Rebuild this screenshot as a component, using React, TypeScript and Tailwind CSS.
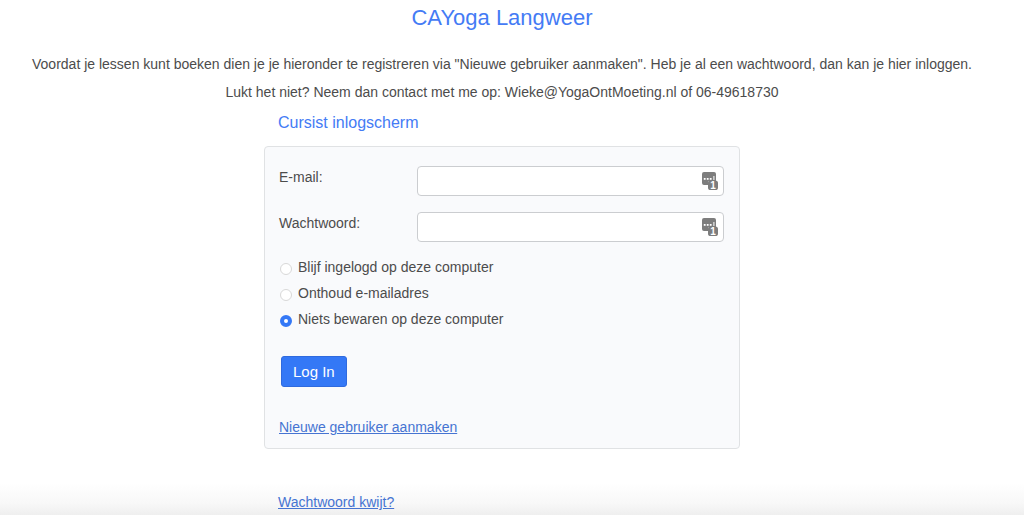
import { useState } from 'react'

const sessionOptions = [
  { id: 'stay', label: 'Blijf ingelogd op deze computer' },
  { id: 'remember', label: 'Onthoud e-mailadres' },
  { id: 'none', label: 'Niets bewaren op deze computer' },
]

function PasswordManagerIcon() {
  return (
    <svg
      viewBox="0 0 16 18"
      aria-hidden="true"
      className="pointer-events-none absolute right-1.5 top-1.5 h-[18px] w-4"
    >
      <path
        d="M2 0h10a2 2 0 0 1 2 2v7H6.5v4H2a2 2 0 0 1-2-2V2a2 2 0 0 1 2-2z"
        fill="#7d7d7d"
      />
      <rect x="1.8" y="6" width="1.8" height="1.8" fill="#fff" />
      <rect x="4.8" y="6" width="1.8" height="1.8" fill="#fff" />
      <rect x="7.8" y="6" width="1.8" height="1.8" fill="#fff" />
      <rect x="11.4" y="4" width="1" height="4" fill="#fff" />
      <rect x="6" y="8.5" width="10" height="9.5" rx="2.6" fill="#7d7d7d" />
      <text
        x="11"
        y="17"
        textAnchor="middle"
        fontSize="10"
        fontWeight="700"
        fill="#fff"
        fontFamily="Liberation Sans, sans-serif"
      >
        1
      </text>
    </svg>
  )
}

function Field({ id, label, type }: { id: string; label: string; type: string }) {
  return (
    <div className="flex items-start">
      <label htmlFor={id} className="w-[138px] shrink-0 leading-[22px]">
        {label}
      </label>
      <div className="relative flex-1">
        <input
          id={id}
          name={id}
          type={type}
          className="block h-[30px] w-full rounded border border-[#cbcdd0] bg-white pl-2 pr-7 outline-none focus:border-[#3478f6]"
        />
        <PasswordManagerIcon />
      </div>
    </div>
  )
}

export default function App() {
  const [session, setSession] = useState('none')

  return (
    <main className="min-h-screen bg-[linear-gradient(to_top,#efefef,#f8f8f8_12px,#fff_32px)] pr-5 font-['Liberation_Sans',Arial,sans-serif] text-sm text-[#4c4c4c] antialiased">
      {/* Intro */}
      <header className="text-center text-sm leading-7">
        <h1 className="text-[22px] leading-9 text-[#447bf5]">CAYoga Langweer</h1>
        <p className="mt-3.5">
          Voordat je lessen kunt boeken dien je je hieronder te registreren via "Nieuwe gebruiker
          aanmaken". Heb je al een wachtwoord, dan kan je hier inloggen.
        </p>
        <p>Lukt het niet? Neem dan contact met me op: Wieke@YogaOntMoeting.nl of 06-49618730</p>
      </header>

      {/* Login */}
      <section className="mx-auto max-w-[476px]">
        <h2 className="pl-3.5 text-base leading-[34px] text-[#447bf5]">Cursist inlogscherm</h2>
        <form
          onSubmit={(e) => e.preventDefault()}
          className="mt-1.5 rounded border border-[#e0e2e4] bg-[#f9fafc] pb-2 pl-3.5 pr-[15px] pt-[19px]"
        >
          <div className="flex flex-col gap-4">
            <Field id="email" label="E-mail:" type="email" />
            <Field id="password" label="Wachtwoord:" type="password" />
          </div>

          <fieldset aria-label="Inloggegevens bewaren" className="mt-3">
            {sessionOptions.map((option) => (
              <label key={option.id} className="flex items-center leading-[26px]">
                <input
                  type="radio"
                  name="session"
                  value={option.id}
                  checked={session === option.id}
                  onChange={() => setSession(option.id)}
                  className="ml-px mr-1.5 mt-1 size-3 appearance-none rounded-full border border-[#d8d8d8] bg-white checked:border-4 checked:border-[#3478f6]"
                />
                {option.label}
              </label>
            ))}
          </fieldset>

          <button
            type="submit"
            className="ml-0.5 mt-6 block h-[31px] rounded-[3px] border border-[#2f6ade] bg-[#3478f6] px-[11px] text-[15px] leading-none text-white"
          >
            Log In
          </button>

          <a href="#aanmaken" className="mt-[27px] block w-fit leading-[26px] text-[#4674d2] underline">
            Nieuwe gebruiker aanmaken
          </a>
        </form>

        <a href="#wachtwoord" className="ml-3.5 mt-10 block w-fit leading-[26px] text-[#4674d2] underline">
          Wachtwoord kwijt?
        </a>
      </section>
    </main>
  )
}
